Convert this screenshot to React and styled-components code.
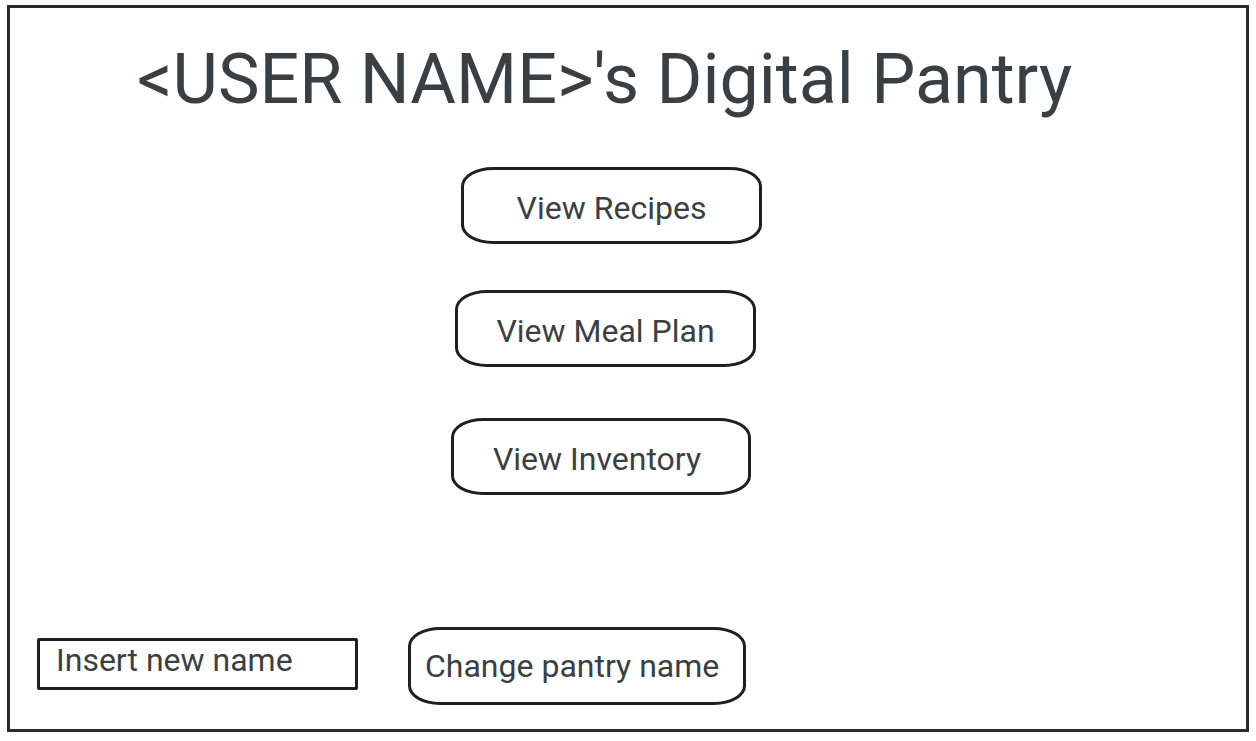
import React from 'react'
import styled, { createGlobalStyle } from 'styled-components'

const GlobalStyle = createGlobalStyle`
  html, body {
    margin: 0;
    padding: 0;
    background: #ffffff;
  }
  body {
    font-family: Roboto, "Liberation Sans", sans-serif;
  }
`

const Frame = styled.div`
  box-sizing: border-box;
  width: 1242px;
  height: 727px;
  margin: 5px 0 0 7px;
  border: 3px solid #2b2b2b;
  display: flex;
  flex-direction: column;
  color: #3a3f44;
`

const Title = styled.h1`
  margin: 29px 0 0 127px;
  font-size: 70px;
  font-weight: 400;
  line-height: 84px;
`

const Menu = styled.div`
  display: flex;
  flex-direction: column;
  align-items: flex-start;
  margin-top: 46px;
`

const PillButton = styled.button`
  box-sizing: border-box;
  width: ${({ $w }) => $w || 301}px;
  height: ${({ $h }) => $h || 77}px;
  margin: ${({ $top }) => $top || 0}px 0 0 ${({ $left }) => $left}px;
  padding: ${({ $lift }) => ($lift ? 0 : 4)}px ${({ $right }) => $right || 0}px 0 ${({ $pad }) => $pad || 0}px;
  background: #fff;
  border: 3px solid #1f1f1f;
  border-radius: 32px / 19px;
  font-family: Roboto, "Liberation Sans", sans-serif;
  font-size: 32px;
  color: #3a3f44;
  text-align: ${({ $pad }) => ($pad ? 'left' : 'center')};
  cursor: pointer;
`

const Footer = styled.div`
  margin-top: auto;
  margin-bottom: 24px;
  display: flex;
  align-items: flex-start;
  gap: 50px;
  padding-left: 27px;
`

const NameField = styled.div`
  box-sizing: border-box;
  width: 321px;
  height: 52px;
  margin-top: 11px;
  border: 3px solid #1f1f1f;
  border-radius: 2px;
  padding: 1px 0 0 16px;
  font-size: 32px;
  line-height: 36px;
  color: #3a3f44;
`

function App() {
  return (
    <>
      <GlobalStyle />
      <Frame>
        <Title>&lt;USER NAME&gt;'s Digital Pantry</Title>
        <Menu>
          <PillButton $left={451}>View Recipes</PillButton>
          <PillButton $left={445} $top={46}>View Meal Plan</PillButton>
          <PillButton $left={441} $top={51} $w={300} $right={8}>View Inventory</PillButton>
        </Menu>
        <Footer>
          <NameField>Insert new name</NameField>
          <PillButton $left={0} $w={338} $h={78} $pad={14} $lift>Change pantry name</PillButton>
        </Footer>
      </Frame>
    </>
  )
}

export default App
